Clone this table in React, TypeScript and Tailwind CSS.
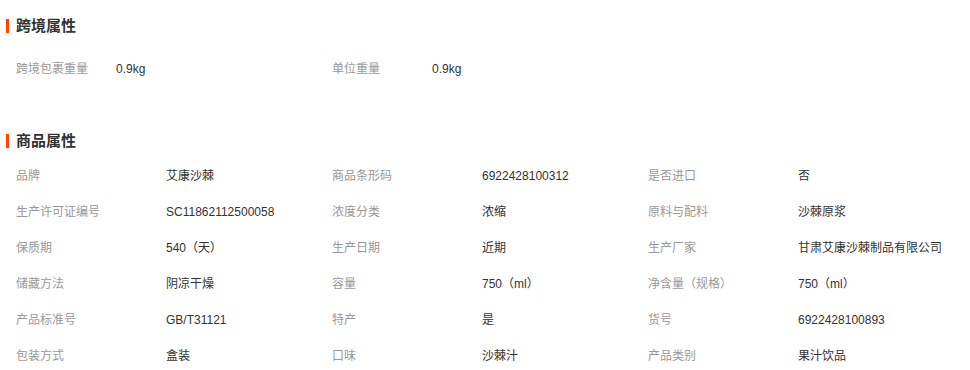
const CROSS_BORDER: [string, string][] = [
  ["跨境包裹重量", "0.9kg"],
  ["单位重量", "0.9kg"],
];

const PRODUCT: [string, string][] = [
  ["品牌", "艾康沙棘"],
  ["商品条形码", "6922428100312"],
  ["是否进口", "否"],
  ["生产许可证编号", "SC11862112500058"],
  ["浓度分类", "浓缩"],
  ["原料与配料", "沙棘原浆"],
  ["保质期", "540（天）"],
  ["生产日期", "近期"],
  ["生产厂家", "甘肃艾康沙棘制品有限公司"],
  ["储藏方法", "阴凉干燥"],
  ["容量", "750（ml）"],
  ["净含量（规格）", "750（ml）"],
  ["产品标准号", "GB/T31121"],
  ["特产", "是"],
  ["货号", "6922428100893"],
  ["包装方式", "盒装"],
  ["口味", "沙棘汁"],
  ["产品类别", "果汁饮品"],
];

function SectionTitle({ title }: { title: string }) {
  return (
    <div className="flex items-center h-5">
      <span className="w-[3px] h-[14px] bg-[#ff4400]" />
      <h3 className="ml-[7px] text-[15px] font-bold text-[#333]">{title}</h3>
    </div>
  );
}

function Attr({ label, value, labelWidth }: { label: string; value: string; labelWidth: string }) {
  return (
    <div className="flex items-center h-9 pl-[10px] text-xs">
      <span className={`${labelWidth} shrink-0 text-[#999]`}>{label}</span>
      <span className="text-[#333] whitespace-nowrap">{value}</span>
    </div>
  );
}

export default function App() {
  return (
    <div
      className="w-[970px] h-[370px] overflow-hidden bg-white pl-[6px] pt-4"
      style={{ fontFamily: '"Liberation Sans", "Noto Sans CJK SC", sans-serif' }}
    >
      <SectionTitle title="跨境属性" />
      <div className="grid grid-cols-[316px_316px] mt-[15px]">
        {CROSS_BORDER.map(([l, v]) => (
          <Attr key={l} label={l} value={v} labelWidth="w-[100px]" />
        ))}
      </div>

      <div className="mt-[44px]">
        <SectionTitle title="商品属性" />
      </div>
      <div className="grid grid-cols-[316px_316px_316px] mt-[7px]">
        {PRODUCT.map(([l, v]) => (
          <Attr key={l} label={l} value={v} labelWidth="w-[150px]" />
        ))}
      </div>
    </div>
  );
}
